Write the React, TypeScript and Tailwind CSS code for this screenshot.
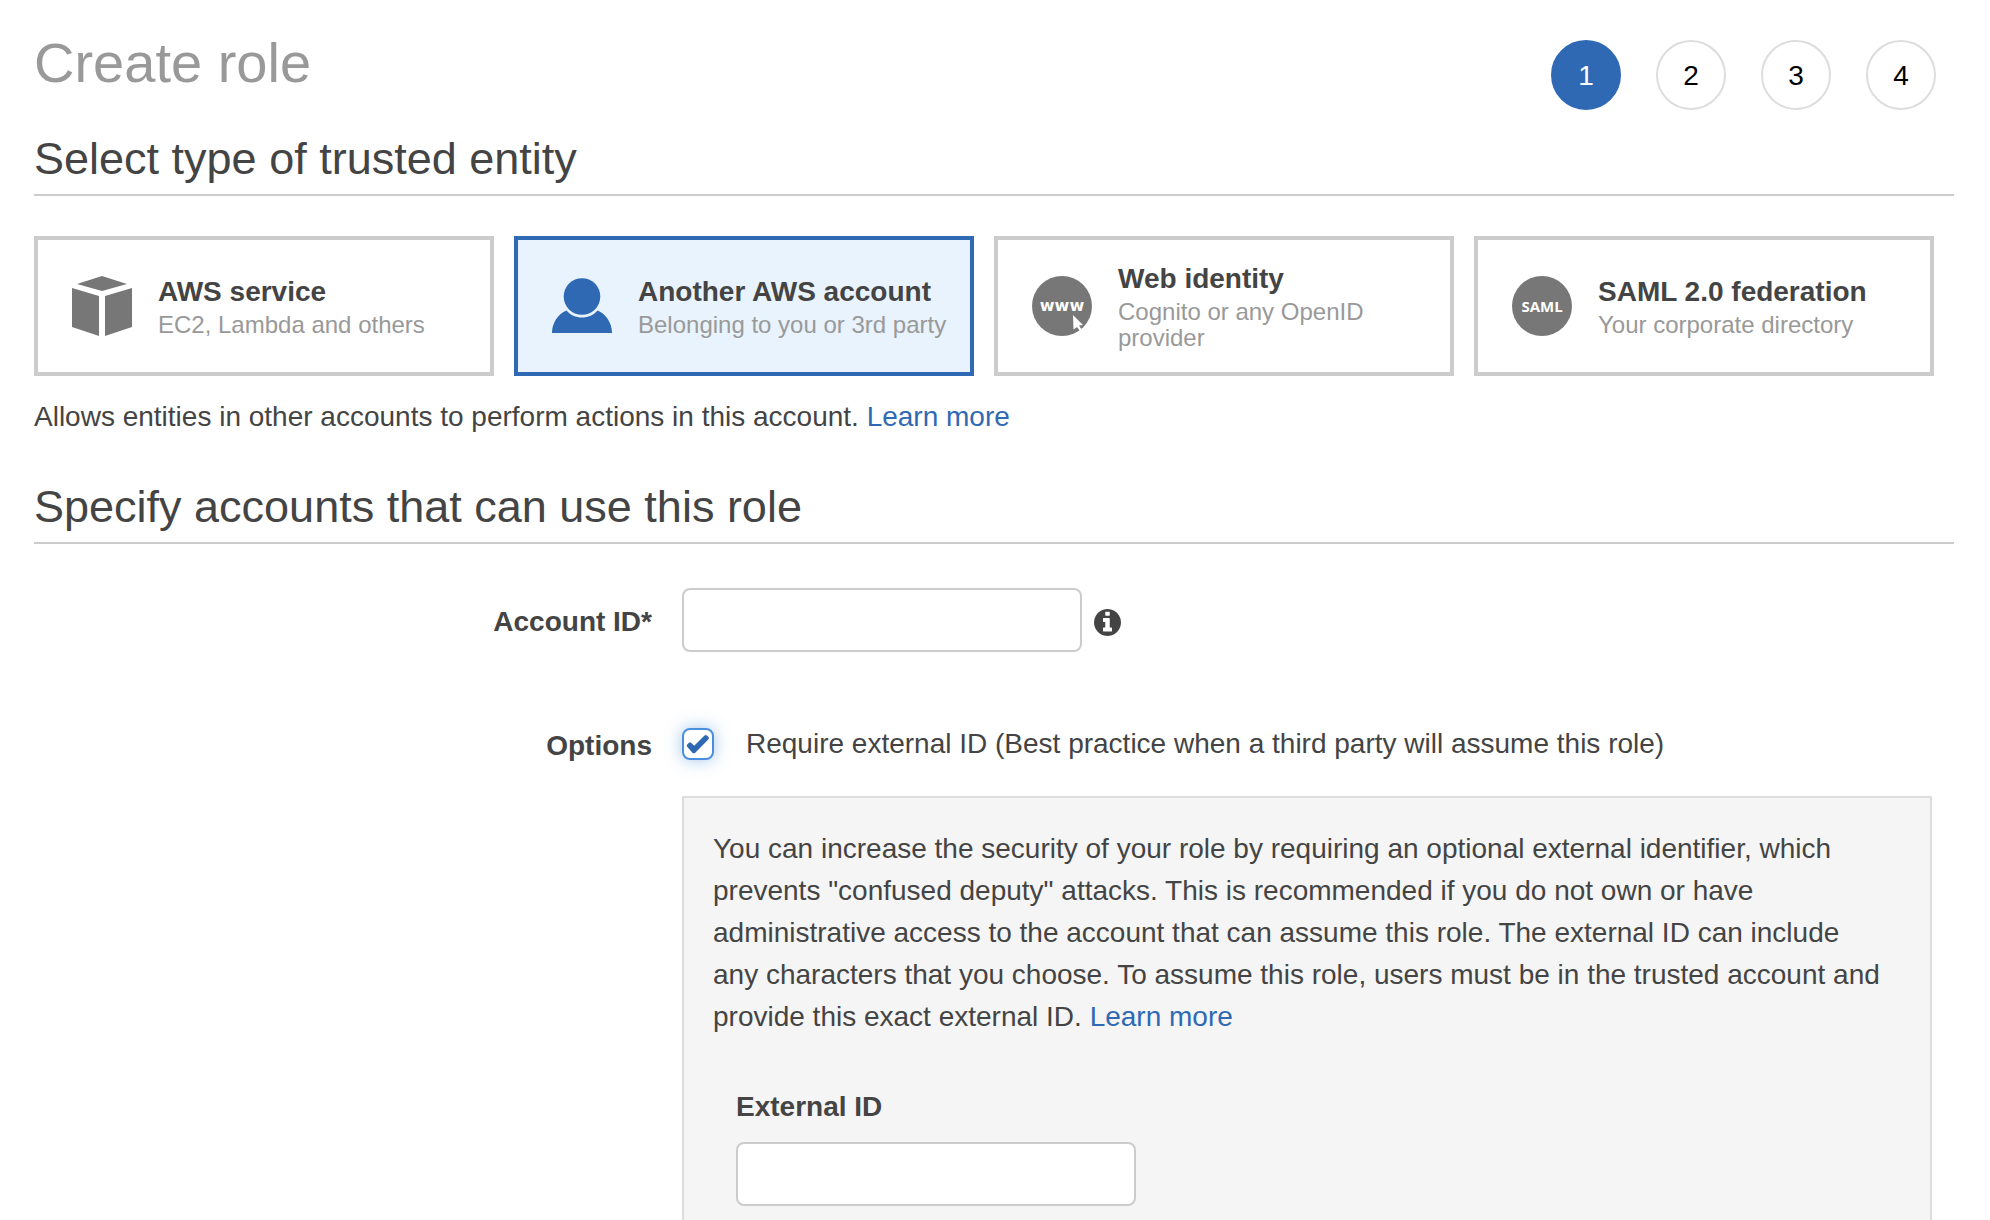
import type { ReactNode } from "react"

const steps = [1, 2, 3, 4]

function CubeIcon() {
    return (
        <svg viewBox="0 0 60 60" className="size-[60px] shrink-0" fill="#777" aria-hidden="true">
            <path d="M30 0L55 8L30 15L5 8Z" />
            <path d="M0 12L27 20V60L0 51Z" />
            <path d="M60 12L33 20V60L60 51Z" />
        </svg>
    )
}

function PersonIcon() {
    return (
        <svg viewBox="0 0 60 60" className="size-[60px] shrink-0" fill="#2f69b4" aria-hidden="true">
            <path d="M0 57C0 47 6 38 14.500 34.500C18 39 24 41.500 30 41.500S42 39 45.500 34.500C54 38 60 47 60 57Z" />
            <circle cx="30" cy="20.500" r="18.300" />
        </svg>
    )
}

function WebIcon() {
    return (
        <svg viewBox="0 0 60 60" className="size-[60px] shrink-0" aria-hidden="true">
            <circle cx="30" cy="30" r="30" fill="#777" />
            <text x="30" y="35" fill="#fff" fontSize="16" textAnchor="middle" className="font-['DejaVu_Sans',sans-serif] font-bold">www</text>
            <path d="M41 39L51 49L47 49.500L50 54L48 55L45 51L41.500 53.500Z" fill="#fff" />
        </svg>
    )
}

function SamlIcon() {
    return (
        <svg viewBox="0 0 60 60" className="size-[60px] shrink-0" aria-hidden="true">
            <circle cx="30" cy="30" r="30" fill="#777" />
            <text x="30" y="36" fill="#fff" fontSize="15" textAnchor="middle" className="font-['Open_Sans',sans-serif] font-bold">SAML</text>
        </svg>
    )
}

function InfoIcon() {
    return (
        <svg viewBox="0 128 1536 1536" className="size-[27px]" fill="currentColor" aria-hidden="true">
            <path d="M1024 1376v-160q0-14-9-23t-23-9h-96v-512q0-14-9-23t-23-9h-320q-14 0-23 9t-9 23v160q0 14 9 23t23 9h96v320h-96q-14 0-23 9t-9 23v160q0 14 9 23t23 9h448q14 0 23-9t9-23zm-128-896v-160q0-14-9-23t-23-9h-192q-14 0-23 9t-9 23v160q0 14 9 23t23 9h192q14 0 23-9t9-23zm640 416q0 209-103 385.500t-279.500 279.500-385.500 103-385.500-103-279.500-279.500-103-385.500 103-385.500 279.500-279.500 385.500-103 385.500 103 279.500 279.500 103 385.500z" />
        </svg>
    )
}

type EntityCardProps = {
    icon: ReactNode
    title: string
    text: string
    selected?: boolean
}

function EntityCard({ icon, title, text, selected = false }: EntityCardProps) {
    return (
        <button
            type="button"
            aria-pressed={selected}
            className={`flex h-[140px] items-center gap-[26px] border-4 pl-[34px] pr-3 text-left ${selected ? "border-[#2f69b4] bg-[#e8f3fd]" : "border-[#ccc] bg-white"}`}
        >
            {icon}
            <span className="block">
                <span className="mb-0.5 block text-[28px] leading-[36px] font-bold">{title}</span>
                <span className="block text-[24px] leading-[26px] text-[#999]">{text}</span>
            </span>
        </button>
    )
}

function SectionTitle({ children }: { children: ReactNode }) {
    return (
        <h2 className="border-b-2 border-[#ccc] pb-2.5 text-[45px] leading-[50px]">{children}</h2>
    )
}

function App() {
    return (
        <main className="flex min-h-screen flex-col bg-white pr-9 pl-[34px] font-['Liberation_Sans',Arial,sans-serif] text-[28px] leading-[42px] text-[#444]">
            <header className="flex items-start justify-between pr-[18px]">
                <h1 className="pt-[31px] text-[56px] leading-[64px] text-[#999]">Create role</h1>
                <ol className="flex gap-[35px] pt-10">
                    {steps.map((step) => (
                        <li
                            key={step}
                            aria-current={step === 1 ? "step" : undefined}
                            className={`flex size-[70px] items-center justify-center rounded-full border-2 pt-0.5 ${step === 1 ? "border-[#2f69b4] bg-[#2f69b4] text-white" : "border-[#ddd] text-black"}`}
                        >
                            {step}
                        </li>
                    ))}
                </ol>
            </header>

            <section className="pt-6">
                <SectionTitle>Select type of trusted entity</SectionTitle>
                <div className="mt-10 grid grid-cols-4 gap-5 pr-5">
                    <EntityCard icon={<CubeIcon />} title="AWS service" text="EC2, Lambda and others" />
                    <EntityCard icon={<PersonIcon />} title="Another AWS account" text="Belonging to you or 3rd party" selected />
                    <EntityCard icon={<WebIcon />} title="Web identity" text="Cognito or any OpenID provider" />
                    <EntityCard icon={<SamlIcon />} title="SAML 2.0 federation" text="Your corporate directory" />
                </div>
                <p className="mt-5">
                    Allows entities in other accounts to perform actions in this account.{" "}
                    <a href="#" className="text-[#2f69b4] hover:underline">Learn more</a>
                </p>
            </section>

            <section className="flex grow flex-col pt-11">
                <SectionTitle>Specify accounts that can use this role</SectionTitle>

                <div className="mt-11 grid grid-cols-[618fr_1250fr] items-center gap-x-[30px] pr-[22px]">
                    <label htmlFor="account-id" className="pt-1 text-right font-bold">Account ID*</label>
                    <div className="flex items-center gap-3">
                        <input id="account-id" type="text" className="h-16 w-[400px] rounded-lg border-2 border-[#ccc] bg-white px-4" />
                        <button type="button" aria-label="About the account ID" className="pt-1">
                            <InfoIcon />
                        </button>
                    </div>
                </div>

                <div className="mt-[71px] grid grow grid-cols-[618fr_1250fr] gap-x-[30px] pr-[22px]">
                    <div className="pt-0.5 text-right font-bold">Options</div>
                    <div className="flex flex-col">
                        <label className="flex items-center gap-8">
                            <span className="grid size-8 place-items-center">
                                <input
                                    type="checkbox"
                                    defaultChecked
                                    className="peer col-start-1 row-start-1 size-8 appearance-none rounded-lg border-2 border-[#4a8fdc] bg-white shadow-[0_0_16px_#4a8fdc80]"
                                />
                                <svg viewBox="0 0 24 20" className="pointer-events-none invisible col-start-1 row-start-1 w-6 peer-checked:visible" fill="#2f69b4" aria-hidden="true">
                                    <path d="M1.200 10.500L3 8.700Q4 7.800 5 8.700L8.200 11.800L18.500 1.600Q19.800 .500 21 1.600L22.500 3Q23.500 4 22.500 5.200L9 18.900Q7.800 19.800 6.600 18.900L1.200 12.800Q.300 11.600 1.200 10.500Z" />
                                </svg>
                            </span>
                            Require external ID (Best practice when a third party will assume this role)
                        </label>

                        <div className="mt-[31px] grow border-2 border-b-0 border-[#ddd] bg-[#f5f5f5] pt-[30px] pr-11 pl-[29px]">
                            <p>
                                You can increase the security of your role by requiring an optional external identifier, which
                                prevents "confused deputy" attacks. This is recommended if you do not own or have
                                administrative access to the account that can assume this role. The external ID can include
                                any characters that you choose. To assume this role, users must be in the trusted account and
                                provide this exact external ID. <a href="#" className="text-[#2f69b4] hover:underline">Learn more</a>
                            </p>
                            <div className="mt-12 flex flex-col items-start gap-3.5 pl-[23px]">
                                <label htmlFor="external-id" className="font-bold">External ID</label>
                                <input id="external-id" type="text" className="h-16 w-[400px] rounded-lg border-2 border-[#ccc] bg-white px-4" />
                            </div>
                        </div>
                    </div>
                </div>
            </section>
        </main>
    )
}

export default App
